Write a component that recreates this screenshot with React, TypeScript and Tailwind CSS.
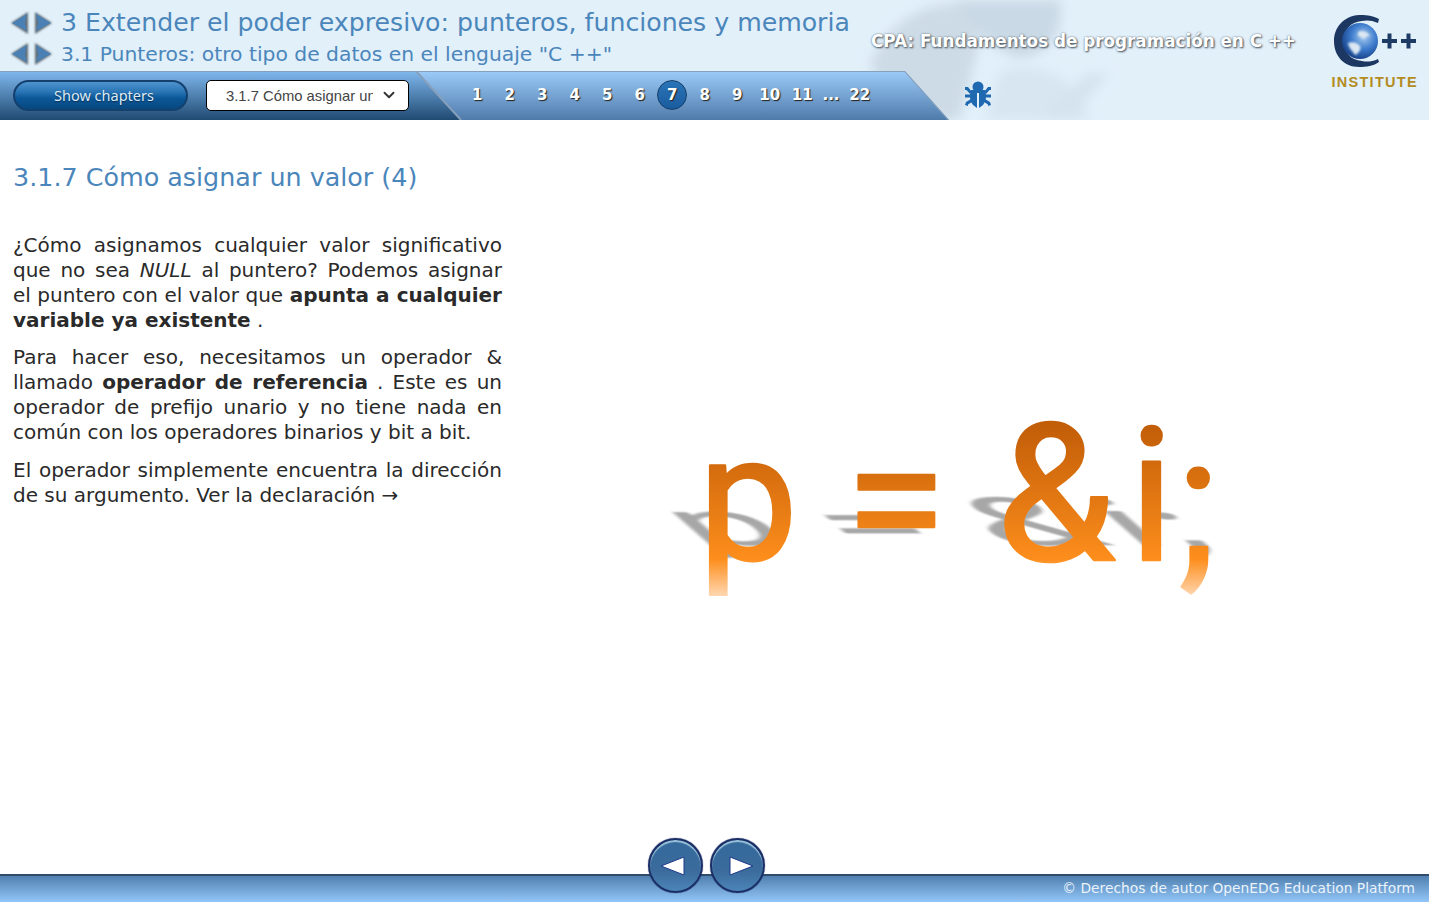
import { ChevronDown } from "lucide-react";

const pages = ["1", "2", "3", "4", "5", "6", "7", "8", "9", "10", "11", "...", "22"];

function ArrowPair({ id }: { id: string }) {
    return (
        <svg width="46" height="24" viewBox="0 0 46 24" className="shrink-0">
            <defs>
                <filter id={id + "b"} x="-30%" y="-30%" width="160%" height="160%"><feGaussianBlur stdDeviation="1.2" /></filter>
            </defs>
            <path d="M20 1 L3 12 L20 23 Z" fill="#4c565f" opacity="0.85" filter={`url(#${id}b)`} />
            <path d="M19 3 L4 12 L19 20 L17 12 Z" fill="#4a80b4" />
            <path d="M27 1 L44 12 L27 23 Z" fill="#4c565f" opacity="0.85" filter={`url(#${id}b)`} />
            <path d="M28 3 L43 12 L28 20 L30 12 Z" fill="#4a80b4" />
        </svg>
    );
}

function HeaderBackdrop() {
    return (
        <svg className="absolute inset-0 w-full h-full" viewBox="0 0 1429 120" preserveAspectRatio="none">
            <defs>
                <filter id="fig"><feGaussianBlur stdDeviation="6" /></filter>
            </defs>
            <g filter="url(#fig)">
                <path d="M870 65 C885 30 910 8 950 4 C975 4 985 25 975 60 L960 120 L900 120 Z" fill="#cddbe6" />
                <path d="M955 0 L1060 0 C1065 30 1050 55 1020 58 C990 50 970 25 955 0 Z" fill="#c9d9e5" />
                <path d="M1000 70 C1040 62 1075 72 1090 120 L985 120 Z" fill="#d7e6f1" />
                <path d="M1040 120 L1085 75 L1110 72 L1070 120 Z" fill="#d4e3ee" />
            </g>
        </svg>
    );
}

function BugIcon() {
    return (
        <svg width="28" height="29" viewBox="0 0 28 29" fill="#1f69b1">
            <circle cx="14" cy="6" r="5.5" />
            <path d="M7 9 H21 V11 C23 14 22 20 19 24 L15 27 V12 H13 V27 L9 24 C6 20 5 14 7 11 Z" />
            <path d="M1 6 H4 L8 11 L6 13 L2.5 9 H1 Z" />
            <path d="M27 6 H24 L20 11 L22 13 L25.5 9 H27 Z" />
            <rect x="1" y="13.5" width="6" height="3" />
            <rect x="21" y="13.5" width="6" height="3" />
            <path d="M1 24 L2 21 L7 18 L8 21 L4 23.5 V25 Z" />
            <path d="M27 24 L26 21 L21 18 L20 21 L24 23.5 V25 Z" />
        </svg>
    );
}

function CppLogo() {
    return (
        <svg width="84" height="54" viewBox="0 0 84 54">
            <defs>
                <radialGradient id="globe" cx="0.6" cy="0.38" r="0.7">
                    <stop offset="0" stopColor="#a8ccf0" />
                    <stop offset="0.5" stopColor="#3c7bcc" />
                    <stop offset="1" stopColor="#12387c" />
                </radialGradient>
                <filter id="soft"><feGaussianBlur stdDeviation="0.9" /></filter>
            </defs>
            <path d="M45 4 C38 0 30 0 25 0 C10 1 0 12 0 26 C0 41 10 52 25 52 C32 52 40 51 45 47 L44 44 C38 47 32 47 28 46 C16 45 10 37 10 26 C10 15 16 7 28 6 C32 5 38 5 44 8 Z" fill="#1d3763" />
            <circle cx="26" cy="26" r="18" fill="url(#globe)" />
            <g filter="url(#soft)" fill="#dbe7f3">
                <path d="M24 17 C28 15 33 16 36 21 C33 21 31 22 30 24 C28 23 26 21 24 21 Z" />
                <path d="M14 28 C19 26 24 28 26 31 C28 34 24 39 21 40 C19 36 15 34 14 28 Z" />
            </g>
            <rect x="48" y="24" width="15" height="4" fill="#1e3b66" />
            <rect x="53.5" y="18.5" width="4" height="15" fill="#1e3b66" />
            <rect x="67" y="24" width="15" height="4" fill="#1e3b66" />
            <rect x="72.5" y="18.5" width="4" height="15" fill="#1e3b66" />
        </svg>
    );
}

function Formula() {
    const glyphs = [
        { c: "p", x: 698, y: 560, size: 178 },
        { c: "=", x: 845, y: 563, size: 185 },
        { c: "&", x: 996, y: 560, size: 192 },
        { c: "i", x: 1129, y: 560, size: 185 },
        { c: ";", x: 1178, y: 567, size: 185 },
    ];
    return (
        <svg width="560" height="200" viewBox="670 410 560 200" className="shrink-0">
            <defs>
                <linearGradient id="ink" gradientUnits="userSpaceOnUse" x1="0" y1="425" x2="0" y2="597">
                    <stop offset="0" stopColor="#c25d08" />
                    <stop offset="0.78" stopColor="#fd8e1c" />
                    <stop offset="1" stopColor="#ffd9b5" />
                </linearGradient>
                <filter id="shade" x="-10%" y="-30%" width="120%" height="160%"><feGaussianBlur stdDeviation="2.2" /></filter>
                <clipPath id="cut"><rect x="670" y="410" width="560" height="186" /></clipPath>
            </defs>
            <g transform="matrix(1 0 0.4 0.35 -224 349)" filter="url(#shade)" fill="#8a8a8a" opacity="0.75" fontFamily="Roboto, sans-serif">
                {glyphs.map((g) => <text key={g.c} x={g.x} y={g.y} fontSize={g.size}>{g.c}</text>)}
            </g>
            <g clipPath="url(#cut)" fill="url(#ink)" stroke="url(#ink)" strokeWidth="2.5" strokeLinejoin="round" fontFamily="Roboto, sans-serif">
                {glyphs.map((g) => <text key={g.c} x={g.x} y={g.y} fontSize={g.size}>{g.c}</text>)}
            </g>
        </svg>
    );
}

function RoundButton({ dir }: { dir: "left" | "right" }) {
    return (
        <button className="w-[55px] h-[55px] rounded-full border-2 border-[#1b2f66] bg-[linear-gradient(#35699c_0%,#3a6b9c_60%,#4d85b8_100%)] shadow-[inset_0_2px_1px_#9fc6dc,0_0_1px_#1b2f66] flex items-center justify-center">
            {dir === "left"
                ? <svg width="26" height="20" viewBox="0 0 26 20" className="mr-[5px]"><path d="M24 1 V19 L1 10 Z" fill="#fff" stroke="#1f3a8a" strokeWidth="1" /></svg>
                : <svg width="26" height="20" viewBox="0 0 26 20" className="ml-[6px]"><path d="M2 1 V19 L25 10 Z" fill="#fff" stroke="#1f3a8a" strokeWidth="1" /></svg>}
        </button>
    );
}

export default function App() {
    return (
        <div className="h-screen flex flex-col bg-white overflow-hidden font-['DejaVu_Sans',sans-serif]">
            <header className="relative h-[120px] shrink-0 flex bg-[#e2f0fa]">
                <HeaderBackdrop />
                <div className="relative flex-1 flex flex-col">
                    <div className="h-[71px] flex">
                        <div className="w-[871px] pl-[8px] pt-[10px]">
                            <div className="flex items-center h-[25px] gap-[7px]">
                                <ArrowPair id="a1" />
                                <span className="text-[25.2px] leading-none text-[#4b86bb] whitespace-nowrap">3 Extender el poder expresivo: punteros, funciones y memoria</span>
                            </div>
                            <div className="flex items-center h-[25px] mt-[6px] gap-[7px]">
                                <ArrowPair id="a2" />
                                <span className="pt-[1px] text-[20.3px] leading-none text-[#4b86bb] whitespace-nowrap">3.1 Punteros: otro tipo de datos en el lenguaje "C ++"</span>
                            </div>
                        </div>
                        <div className="pt-[30px] text-[16.8px] leading-[22px] font-bold text-white whitespace-nowrap [text-shadow:1px_1px_2px_#46535e,0_0_2px_#6b7883]">CPA: Fundamentos de programación en C ++</div>
                    </div>
                    <div className="flex items-center">
                        <nav className="relative flex h-[49px] w-[949px] shrink-0 bg-[linear-gradient(#9ccbf9_0,#4f7bab_100%)] [clip-path:polygon(0_0,905px_0,949px_100%,0_100%)]">
                            <div className="w-[461px] shrink-0 flex items-center pl-[13px] pb-[1px] gap-[18px] bg-[linear-gradient(#80b8ee_0,#1f4a72_100%)] [clip-path:polygon(0_0,416px_0,461px_100%,0_100%)]">
                                <button className="w-[175px] h-[31px] rounded-full border-2 border-[#15406d] bg-[linear-gradient(#4f94cf_0%,#2b76b6_35%,#0b5798_60%,#07487f_100%)] text-[14.5px] text-[#dcebf7] font-['Noto_Sans',sans-serif] [text-shadow:0_1px_1px_#0a2f52] pl-[7px] pt-[1px]">Show chapters</button>
                                <div className="w-[203px] h-[31px] rounded-[5px] border border-black bg-white flex items-center pl-[19px] pr-[10px]">
                                    <span className="w-[147px] pt-[2px] overflow-hidden whitespace-nowrap text-[14.8px] text-[#444] font-['Liberation_Sans',sans-serif]">3.1.7 Cómo asignar un valor (4)</span>
                                    <ChevronDown className="ml-auto w-[18px] h-[18px] text-[#333]" strokeWidth={2.5} />
                                </div>
                            </div>
                            <div className="flex items-center pb-[1px] text-[15px] font-bold text-white [text-shadow:1px_1px_1px_#26211a]">
                                {pages.map((p) => (
                                    <span key={p} className={p === "..." ? "w-[25px] text-center" : "w-[32.5px] flex justify-center"}>
                                        {p === "7"
                                            ? <span className="w-[30px] h-[30px] rounded-full border border-[#173e66] bg-[linear-gradient(#2a74b8,#1a5c9e)] flex items-center justify-center">{p}</span>
                                            : p}
                                    </span>
                                ))}
                            </div>
                            <svg className="absolute inset-0 pointer-events-none" width="949" height="49" viewBox="0 0 949 49" fill="none" stroke="#86a0bc" strokeWidth="2">
                                <path d="M0 0 H905 L949 49" />
                                <path d="M416 0 L461 49" />
                            </svg>
                        </nav>
                        <div className="ml-[15px]"><BugIcon /></div>
                    </div>
                </div>
                <div className="relative w-[96px] shrink-0 pt-[15px] pr-[11px] flex flex-col items-end">
                    <CppLogo />
                    <span className="mt-[4px] text-[14.5px] leading-[18px] font-bold tracking-[1.3px] text-[#b38c22] whitespace-nowrap font-['Liberation_Sans',sans-serif]">INSTITUTE</span>
                </div>
            </header>

            <main className="flex-1 flex items-start pl-[13px]">
                <div className="w-[489px] shrink-0 pt-[41px] text-[20px] leading-[25px] text-[#2a2a2a]">
                    <h1 className="text-[25.4px] leading-[32px] text-[#4b86bb] mb-[39.5px] whitespace-nowrap">3.1.7 Cómo asignar un valor (4)</h1>
                    <p className="text-justify mb-[12.5px]">¿Cómo asignamos cualquier valor significativo que no sea <em>NULL</em> al puntero? Podemos asignar el puntero con el valor que <strong>apunta a cualquier variable ya existente</strong> .</p>
                    <p className="text-justify mb-[12.5px]">Para hacer eso, necesitamos un operador &amp; llamado <strong>operador de referencia</strong> . Este es un operador de prefijo unario y no tiene nada en común con los operadores binarios y bit a bit.</p>
                    <p className="text-justify">El operador simplemente encuentra la dirección de su argumento. Ver la declaración →</p>
                </div>
                <div className="ml-[168px] mt-[290px]"><Formula /></div>
            </main>

            <footer className="relative h-[28px] shrink-0 border-t-2 border-[#2f4c6b] bg-[linear-gradient(#4f80b0,#93c6f8)] flex items-center justify-end pr-[14px] pb-[2px]">
                <span className="text-[13.8px] text-[#eaf3fb]">© Derechos de autor OpenEDG Education Platform</span>
                <div className="absolute left-[648px] -top-[38px] flex gap-[7px]">
                    <RoundButton dir="left" />
                    <RoundButton dir="right" />
                </div>
            </footer>
        </div>
    );
}
